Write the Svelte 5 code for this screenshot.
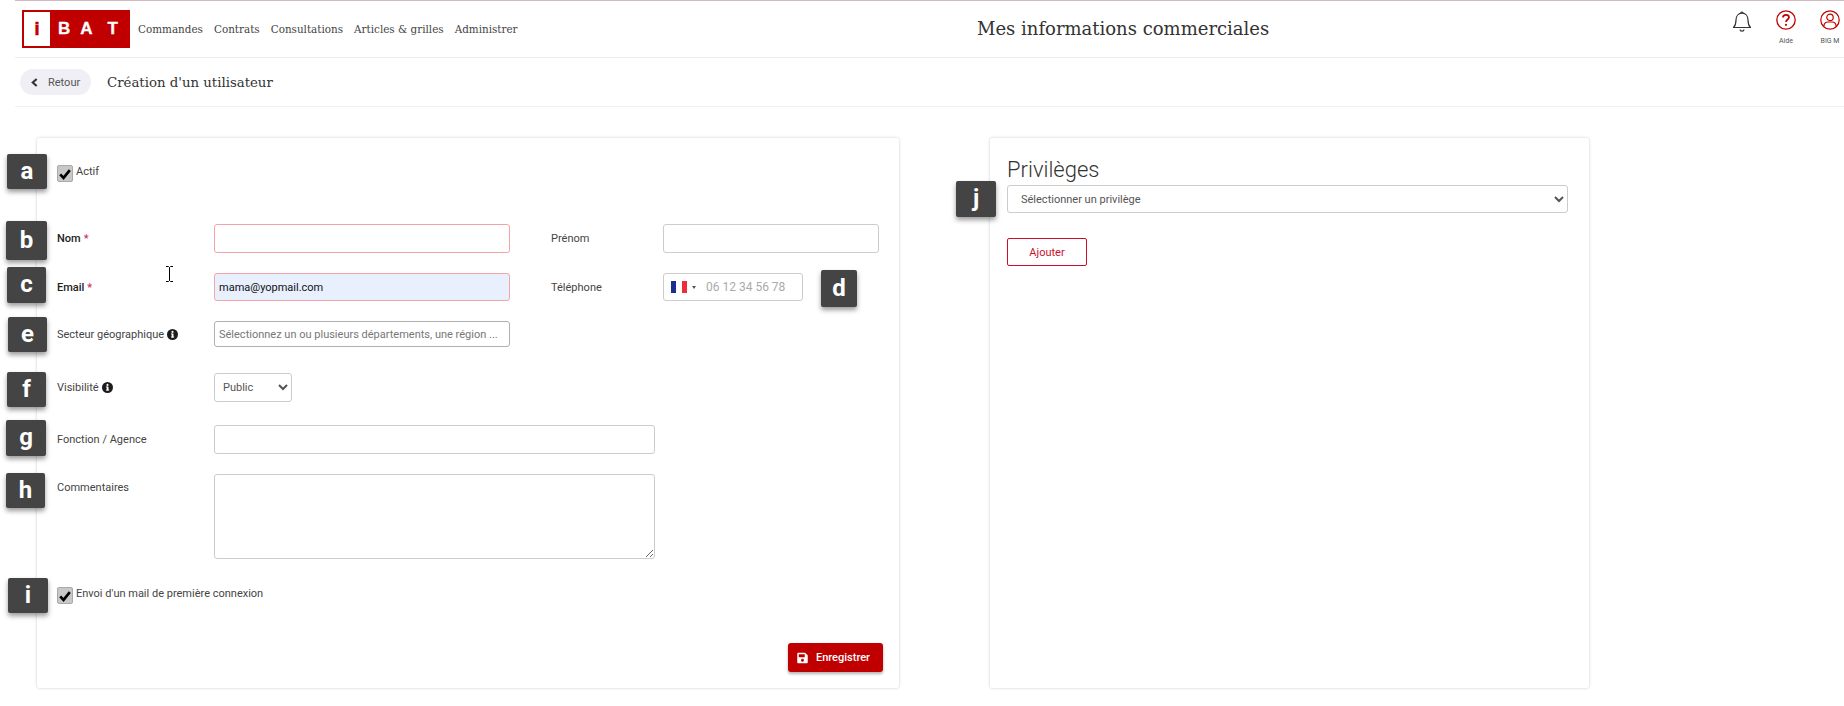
<script lang="ts">
	const navItems = ['Commandes', 'Contrats', 'Consultations', 'Articles & grilles', 'Administrer'];

	// annotation tags laid over the screenshot
	const tags = [
		{ id: 'a', x: 7, y: 154, w: 40, h: 35 },
		{ id: 'b', x: 6, y: 221, w: 41, h: 39 },
		{ id: 'c', x: 7, y: 267, w: 39, h: 36 },
		{ id: 'd', x: 821, y: 270, w: 36, h: 37 },
		{ id: 'e', x: 8, y: 317, w: 39, h: 35 },
		{ id: 'f', x: 7, y: 372, w: 39, h: 35 },
		{ id: 'g', x: 6, y: 420, w: 40, h: 36 },
		{ id: 'h', x: 6, y: 473, w: 39, h: 35 },
		{ id: 'i', x: 8, y: 578, w: 40, h: 35 },
		{ id: 'j', x: 956, y: 181, w: 40, h: 36 }
	];
</script>

{#snippet info()}
	<svg class="info" viewBox="0 0 16 16" width="11" height="11">
		<circle cx="8" cy="8" r="8" fill="#1c1c1c" />
		<rect x="6.8" y="6.6" width="2.6" height="5.6" fill="#fff" />
		<rect x="5.8" y="11" width="4.6" height="1.4" fill="#fff" />
		<rect x="5.8" y="6.6" width="2" height="1.3" fill="#fff" />
		<circle cx="8" cy="4.2" r="1.5" fill="#fff" />
	</svg>
{/snippet}

{#snippet check()}
	<span class="check">
		<svg viewBox="0 0 16 16" width="14" height="14">
			<path d="M2.5 8.5 L6.3 12.5 L13.5 3.5" fill="none" stroke="#000" stroke-width="3" />
		</svg>
	</span>
{/snippet}

<div class="page">
	<header class="topbar">
		<div class="logo">
			<span class="logo-i">i</span>
			<span class="logo-rest">B<span class="wide">A</span>T</span>
		</div>
		<nav class="nav">
			{#each navItems as item}
				<span>{item}</span>
			{/each}
		</nav>
		<h1 class="apptitle">Mes informations commerciales</h1>
		<div class="tools">
			<div class="tool bell">
				<svg viewBox="0 0 20 22" width="20" height="22" fill="none" stroke="#333" stroke-width="1.2">
					<path d="M1.5 17.5 C3.5 15.5 4 13.5 4 10 C4 6 6.5 3.2 10 3.2 C13.5 3.2 16 6 16 10 C16 13.5 16.5 15.5 18.5 17.5 Z" stroke-linejoin="round" />
					<path d="M9 3 a1 1 0 0 1 2 0" />
					<path d="M8 19.5 a2 1.6 0 0 0 4 0" />
				</svg>
			</div>
			<div class="tool help">
				<svg viewBox="0 0 20 20" width="20" height="20" fill="none" stroke="#c00000" stroke-width="1.3">
					<circle cx="10" cy="10" r="9.2" />
					<path d="M7 7.6 C7 5.6 8.4 4.8 10 4.8 C11.8 4.8 13 5.8 13 7.3 C13 9.4 10 9.6 10 11.9" stroke-width="1.7" />
					<circle cx="10" cy="14.8" r="1.1" fill="#c00000" stroke="none" />
				</svg>
				<small>Aide</small>
			</div>
			<div class="tool user">
				<svg viewBox="0 0 20 20" width="20" height="20" fill="none" stroke="#c00000" stroke-width="1.2">
					<circle cx="10" cy="10" r="9.2" />
					<circle cx="10" cy="7.4" r="3.2" />
					<path d="M3.8 16.4 C4 13.4 6 12 8 12 L12 12 C14 12 16 13.4 16.2 16.4" />
				</svg>
				<small>BIG M</small>
			</div>
		</div>
	</header>

	<div class="subbar">
		<button class="back" type="button">
			<svg viewBox="0 0 8 10" width="7" height="9" fill="none" stroke="#333" stroke-width="2.4">
				<path d="M6.5 1 L2 5 L6.5 9" />
			</svg>
			Retour
		</button>
		<h2 class="subtitle">Création d'un utilisateur</h2>
	</div>

	<main class="cards">
		<section class="card form">
			<div class="checkrow first">
				{@render check()}
				<span>Actif</span>
			</div>

			<div class="row nom">
				<span class="label strong">Nom <em>*</em></span>
				<input class="input req w-main" type="text" />
				<span class="label second">Prénom</span>
				<input class="input w-side" type="text" />
			</div>

			<div class="row email">
				<span class="label strong">Email <em>*</em></span>
				<input class="input req filled w-main" type="text" value="mama@yopmail.com" />
				<span class="label second">Téléphone</span>
				<div class="input phone">
					<span class="flag"><i></i><i></i><i></i></span>
					<span class="caret"></span>
					<span class="ph">06 12 34 56 78</span>
				</div>
			</div>

			<div class="row secteur">
				<span class="label">Secteur géographique {@render info()}</span>
				<input class="input dark w-main" type="text" placeholder="Sélectionnez un ou plusieurs départements, une région ..." />
			</div>

			<div class="row visib">
				<span class="label">Visibilité {@render info()}</span>
				<select class="input sel-small">
					<option>Public</option>
				</select>
			</div>

			<div class="row fonction">
				<span class="label">Fonction / Agence</span>
				<input class="input w-wide" type="text" />
			</div>

			<div class="row comments">
				<span class="label top">Commentaires</span>
				<textarea class="input w-wide area"></textarea>
			</div>

			<div class="checkrow">
				{@render check()}
				<span>Envoi d'un mail de première connexion</span>
			</div>

			<div class="actions">
				<button class="save" type="button">
					<svg viewBox="0 0 448 512" width="11" height="12" fill="#fff">
						<path d="M433.9 129.9l-83.9-83.9A48 48 0 0 0 316.1 32H48C21.5 32 0 53.5 0 80v352c0 26.5 21.5 48 48 48h352c26.5 0 48-21.5 48-48V163.9a48 48 0 0 0-14.1-34zM224 416c-35.3 0-64-28.7-64-64s28.7-64 64-64 64 28.7 64 64-28.7 64-64 64zm96-304.5V212c0 6.6-5.4 12-12 12H76c-6.6 0-12-5.4-12-12V108c0-6.6 5.4-12 12-12h228.5c3.2 0 6.2 1.3 8.5 3.5l3.5 3.5c2.3 2.3 3.5 5.3 3.5 8.5z" />
					</svg>
					Enregistrer
				</button>
			</div>
		</section>

		<section class="card priv">
			<h3>Privilèges</h3>
			<select class="input sel-full">
				<option>Sélectionner un privilège</option>
			</select>
			<button class="add" type="button">Ajouter</button>
		</section>
	</main>

	{#each tags as t (t.id)}
		<span class="tag" style="left:{t.x}px;top:{t.y}px;width:{t.w}px;height:{t.h}px">{t.id}</span>
	{/each}

	<svg class="ibeam" viewBox="0 0 7 16" width="7" height="16" fill="none" stroke="#000" stroke-width="1">
		<path d="M0 .5 H2.5 L3.5 1.5 L4.5 .5 H7 M3.5 1.5 V14.5 M0 15.5 H2.5 L3.5 14.5 L4.5 15.5 H7" />
	</svg>
</div>

<style>
	:global(body) {
		background: #fff;
		color: #333;
		font-family: Roboto, 'Liberation Sans', sans-serif;
		font-size: 12px;
	}

	.page {
		height: 706px;
		overflow: hidden;
		position: relative;
	}

	.topbar {
		align-items: center;
		border-bottom: 1px solid #ececec;
		border-top: 1px solid #d3b9c0;
		display: flex;
		height: 56px;
		margin-left: 15px;
		padding-left: 7px;
		position: relative;
	}

	.logo {
		align-items: center;
		background: #c00000;
		box-sizing: border-box;
		display: flex;
		flex: none;
		height: 38px;
		margin-top: -1px;
		padding: 0 2px;
		width: 108px;
	}

	.logo-i {
		background: #fff;
		color: #c00000;
		font-family: 'Liberation Sans', sans-serif;
		font-size: 18px;
		font-weight: 700;
		height: 34px;
		line-height: 34px;
		text-align: center;
		-webkit-text-stroke: 0.6px #c00000;
		width: 31px;
	}

	.logo-rest {
		color: #fff;
		font-family: 'Liberation Sans', sans-serif;
		font-size: 17px;
		font-weight: 700;
		letter-spacing: 10px;
		margin-left: 8px;
		-webkit-text-stroke: 0.3px #fff;
		white-space: nowrap;
	}

	.logo-rest .wide {
		letter-spacing: 15px;
	}

	.nav {
		color: #444;
		display: flex;
		font-family: 'DejaVu Serif', serif;
		font-size: 10.4px;
		gap: 11px;
		margin-left: 8px;
	}

	.apptitle {
		color: #333;
		font-family: 'DejaVu Serif', serif;
		font-size: 18px;
		font-weight: 400;
		left: 962px;
		margin: 0;
		position: absolute;
		top: 17px;
	}

	.tools {
		align-items: flex-start;
		display: flex;
		margin-left: auto;
		margin-right: -8px;
	}

	.tool {
		align-items: center;
		display: flex;
		flex-direction: column;
		height: 44px;
		margin-top: 6px;
		width: 44px;
	}

	.tool small {
		color: #555;
		font-size: 7px;
		margin-top: 7px;
	}

	.subbar {
		align-items: center;
		border-bottom: 1px solid #f1f1f1;
		display: flex;
		gap: 16px;
		height: 48px;
		margin-left: 15px;
		padding-left: 5px;
	}

	.back {
		align-items: center;
		background: #f0eff5;
		border: 0;
		border-radius: 13px;
		color: #555;
		display: flex;
		font-family: Roboto, sans-serif;
		font-size: 11px;
		gap: 10px;
		height: 26px;
		padding: 0 0 0 11px;
		white-space: nowrap;
		width: 71px;
	}

	.subtitle {
		color: #333;
		font-family: 'DejaVu Serif', serif;
		font-size: 13.3px;
		font-weight: 400;
		margin: 0;
	}

	.cards {
		align-items: flex-start;
		display: flex;
		gap: 91px;
		margin-left: 37px;
		padding-top: 31px;
	}

	.card {
		background: #fff;
		border-radius: 2px;
		box-shadow: 0 0 3px rgba(0, 0, 0, 0.22);
		box-sizing: border-box;
		height: 550px;
	}

	.form {
		padding: 27px 16px 0 20px;
		width: 862px;
	}

	.checkrow {
		align-items: center;
		color: #444;
		display: flex;
		font-size: 11px;
		gap: 3px;
	}

	.checkrow > span:last-child {
		padding-bottom: 4px;
	}

	.check {
		align-items: center;
		background: #c8c8c8;
		border: 1px solid #aaa;
		border-radius: 2px;
		box-sizing: border-box;
		display: flex;
		height: 17px;
		justify-content: center;
		width: 16px;
	}

	.first {
		margin-bottom: 42px;
	}

	.row {
		align-items: center;
		display: flex;
	}

	.nom { margin-bottom: 20px; }
	.email { margin-bottom: 20px; }
	.secteur { margin-bottom: 26px; }
	.visib { margin-bottom: 23px; }
	.fonction { margin-bottom: 20px; }
	.comments { align-items: flex-start; margin-bottom: 28px; }

	.label {
		align-items: center;
		color: #444;
		display: flex;
		flex: none;
		font-size: 11px;
		gap: 3px;
		width: 157px;
	}

	.label.top {
		padding-top: 7px;
	}

	.label.strong {
		color: #222;
		font-weight: 500;
	}

	.label em {
		color: #d0305a;
		font-style: normal;
	}

	.label.second {
		margin-left: 41px;
		width: 112px;
	}

	.input {
		background: #fff;
		border: 1px solid #ccc;
		border-radius: 3px;
		box-sizing: border-box;
		color: #555;
		font-family: Roboto, sans-serif;
		font-size: 11px;
		height: 29px;
		margin: 0;
		outline: 0;
	}

	.w-main { width: 296px; }
	.w-side { width: 216px; }
	.w-wide { width: 441px; }

	.req {
		border-color: #f5a3a6;
	}

	.filled {
		background: #e8f0fe;
		color: #111;
		height: 28px;
		padding: 0 4px;
	}

	.dark {
		border-color: #b0b0b0;
		height: 26px;
		padding: 0 4px;
	}

	.dark::placeholder {
		color: #777;
		opacity: 1;
	}

	.phone {
		align-items: center;
		display: flex;
		height: 28px;
		padding-left: 7px;
		width: 140px;
	}

	.flag {
		display: flex;
		height: 12px;
		width: 16px;
	}

	.flag i {
		flex: 1;
	}

	.flag i:nth-child(1) { background: #1c2f8f; }
	.flag i:nth-child(2) { background: #fff; }
	.flag i:nth-child(3) { background: #ef2b3d; }

	.caret {
		border-left: 2.5px solid transparent;
		border-right: 2.5px solid transparent;
		border-top: 3px solid #555;
		margin-left: 5px;
	}

	.ph {
		color: #aaa;
		font-size: 12px;
		margin-left: 10px;
	}

	.sel-small {
		padding: 0 2px 0 4px;
		width: 78px;
	}

	.area {
		display: block;
		height: 85px;
		resize: both;
	}

	.actions {
		display: flex;
		justify-content: flex-end;
		margin-top: 39px;
	}

	.save {
		align-items: center;
		background: #c00000;
		border: 0;
		border-radius: 3px;
		box-shadow: 0 2px 3px rgba(0, 0, 0, 0.3);
		color: #fff;
		display: flex;
		font-family: Roboto, sans-serif;
		font-size: 11px;
		font-weight: 500;
		gap: 8px;
		height: 29px;
		padding: 0 0 0 9px;
		width: 95px;
	}

	.priv {
		padding: 18px 21px 0 17px;
		width: 599px;
	}

	.priv h3 {
		color: #333;
		font-size: 22px;
		font-weight: 300;
		line-height: 27px;
		margin: 0 0 2px;
	}

	.sel-full {
		display: block;
		height: 28px;
		padding-left: 9px;
		width: 100%;
	}

	.add {
		background: #fff;
		border: 1px solid #c8102e;
		border-radius: 2px;
		color: #c8102e;
		display: block;
		font-family: Roboto, sans-serif;
		font-size: 11px;
		height: 28px;
		margin-top: 25px;
		width: 80px;
	}

	.tag {
		align-items: center;
		background: #444;
		border-radius: 2px;
		box-shadow: 0 3px 5px rgba(0, 0, 0, 0.4);
		color: #fff;
		display: flex;
		font-family: Roboto, sans-serif;
		font-size: 24px;
		font-weight: 700;
		justify-content: center;
		line-height: 1;
		padding-bottom: 2px;
		box-sizing: border-box;
		position: absolute;
	}

	.ibeam {
		left: 166px;
		position: absolute;
		top: 266px;
	}
</style>
